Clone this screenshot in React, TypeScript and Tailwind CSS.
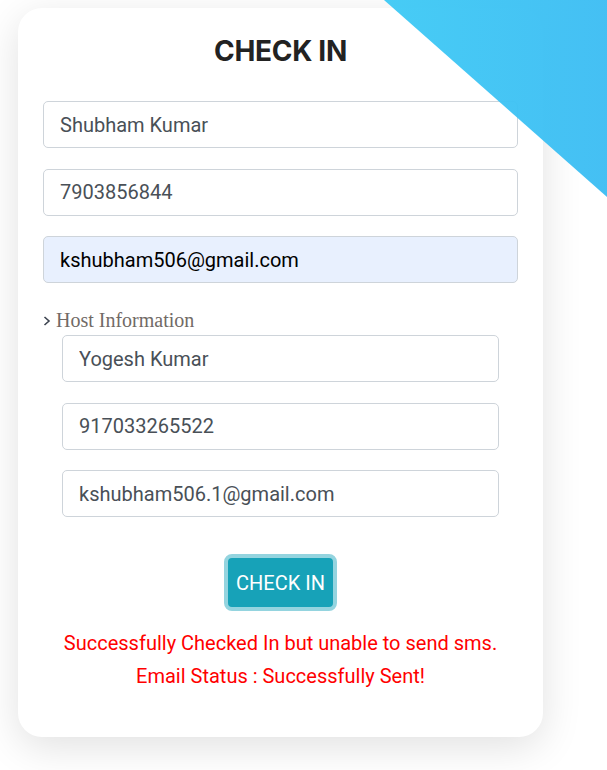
import React from "react";

const inputCls =
  "w-full h-[47px] rounded-[5px] border border-[#ced4da] px-4 text-[20px] text-[#495057] outline-none";

export default function App() {
  return (
    <div className="relative w-[607px] h-[770px] overflow-hidden bg-white font-['Roboto',sans-serif]">
      <div className="ml-[18px] mt-[8px] w-[525px] h-[729px] rounded-[24px] bg-white shadow-[0_10px_40px_rgba(0,0,0,0.12)] px-[25px] pt-[26px]">
        <h1 className="text-center text-[28px] leading-[34px] font-bold text-[#222] font-['Inter',sans-serif] tracking-[-0.3px]">
          CHECK IN
        </h1>

        <div className="mt-[33px] flex flex-col gap-[20.5px]">
          <input className={inputCls} defaultValue="Shubham Kumar" />
          <input className={inputCls} defaultValue="7903856844" />
          <input
            className={inputCls + " bg-[#e8f0fe] !text-black"}
            defaultValue="kshubham506@gmail.com"
          />
        </div>

        <div className="mt-[25px] flex items-center gap-[5px] text-[20px] leading-[24px] text-[#716a66] font-['Liberation_Serif',serif]">
          <svg width="8" height="12" viewBox="0 0 8 12" className="mt-[1px]">
            <path d="M1.5 2 L6 6 L1.5 10" fill="none" stroke="#3d4450" strokeWidth="1.6" />
          </svg>
          Host Information
        </div>

        <div className="ml-[19px] mr-[19px] mt-[3px] flex flex-col gap-[20.5px]">
          <input className={inputCls} defaultValue="Yogesh Kumar" />
          <input className={inputCls} defaultValue="917033265522" />
          <input className={inputCls} defaultValue="kshubham506.1@gmail.com" />
        </div>

        <div className="mt-[37px] flex justify-center">
          <button className="h-[57px] px-[8px] rounded-[8px] bg-[#17a2b8] text-white text-[20px] border-[4px] border-[#94d4df]">
            CHECK IN
          </button>
        </div>

        <div className="mt-[16px] text-center text-[20px] leading-[33px] text-[#ff0000]">
          <p>Successfully Checked In but unable to send sms.</p>
          <p>Email Status : Successfully Sent!</p>
        </div>
      </div>

      <div className="absolute top-0 right-0 w-[223px] h-[197px] [clip-path:polygon(0_0,100%_0,100%_100%)] bg-gradient-to-r from-[#3fcaf5] to-[#3dbdf3] opacity-[0.96]" />
    </div>
  );
}
